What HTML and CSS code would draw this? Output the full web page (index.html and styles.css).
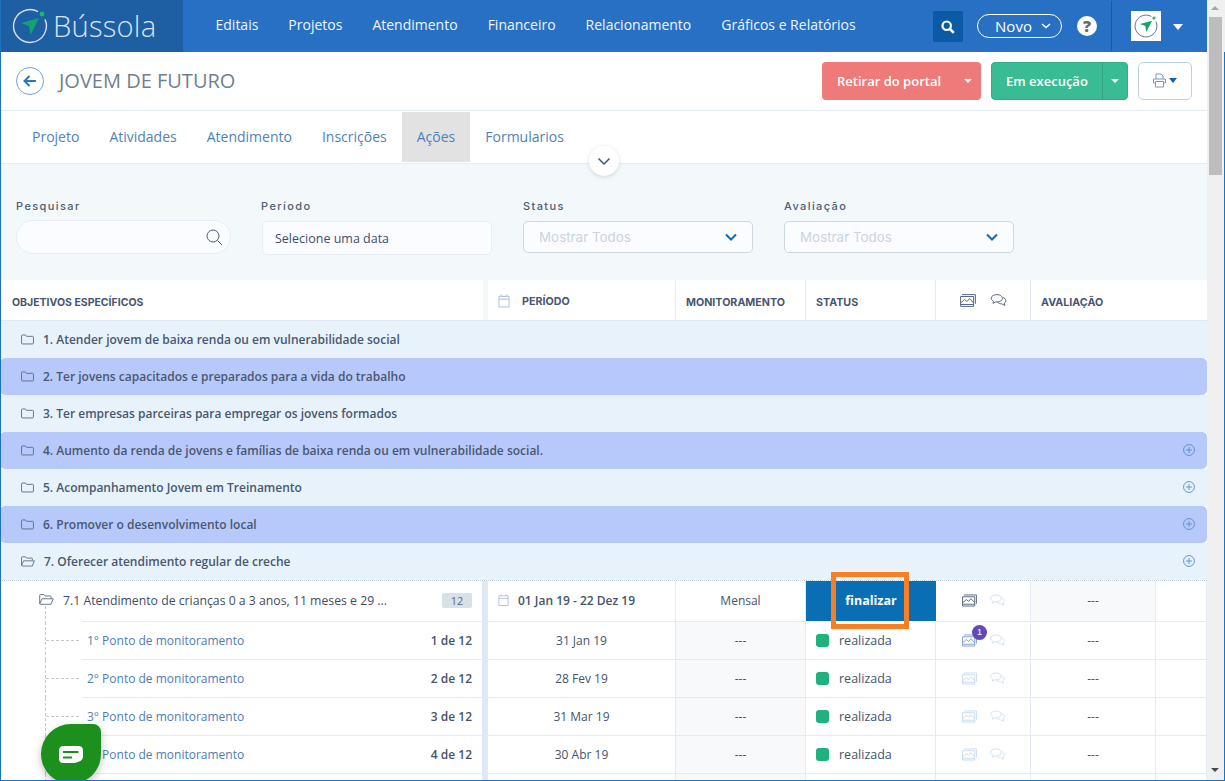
FILE: index.html
```html
<!DOCTYPE html>
<html lang="pt">
<head>
<meta charset="utf-8">
<title>Bússola</title>
<link rel="stylesheet" href="styles.css">
</head>
<body>
<svg class="sprites" width="0" height="0" aria-hidden="true">
  <symbol id="folder" viewBox="0 0 14 11"><path d="M.6 1.6q0-1 1-1h3l1.3 1.5h6.5q1 0 1 1v6.2q0 1-1 1H1.6q-1 0-1-1z" fill="none" stroke="currentColor"/></symbol>
  <symbol id="cal" viewBox="0 0 13 15"><path d="M1 2.500h11v11.500H1zM1 5.500h11M3.500.5v2M9.500.5v2" fill="none" stroke="currentColor"/></symbol>
  <symbol id="img" viewBox="0 0 16 13"><path d="M2 .6h13.400v9.200" fill="none" stroke="currentColor"/><path d="M.6 2.500h13v9.900H.6z" fill="none" stroke="currentColor"/><path d="M.6 9l4-3.500 2.500 2 2.500-3 4 4.500M.6 10.500h13" fill="none" stroke="currentColor"/></symbol>
  <symbol id="chat" viewBox="0 0 16 13"><path d="M6.500.6c3 0 5.400 1.500 5.400 3.700s-2.400 3.700-5.400 3.700H5L2.500 9.400l.4-2.200C1.500 6.500.7 5.500.7 4.300.7 2.100 3.400.6 6.500.6zM12.500 3.500c1.700.6 2.800 1.800 2.800 3.200 0 1-.5 1.800-1.500 2.400l.5 2.400-2.800-1.600c-2 0-3.700-.7-4.500-1.900" fill="none" stroke="currentColor"/></symbol>
  <symbol id="plus" viewBox="0 0 13 13"><circle cx="6.500" cy="6.500" r="5.900" fill="none" stroke="currentColor"/><path d="M6.500 3.200v6.600M3.200 6.500h6.600" stroke="currentColor"/></symbol>
  <symbol id="open" viewBox="0 0 16 12"><path d="M.6 10.500V1.600q0-1 1-1h3.500l1.400 1.500H12q1 0 1 1v1.400M.6 10.800 3 5.200h12.300l-2.400 6H1.500q-.9 0-.9-.4z" fill="none" stroke="currentColor"/></symbol>
  <symbol id="compass" viewBox="0 0 36 36"><path d="M26 3.700A16.400 16.400 0 1 0 33 11.400" fill="none" stroke="currentColor" stroke-width="1.400"/><path d="M9 15 27 10l-8.500 17-1.500-9z" fill="#12a36f"/><circle cx="30" cy="6" r="2.400" fill="#1fb86a"/></symbol>
</svg>

<header class="topbar">
  <a class="brand">
    <svg class="brand-mark"><use href="#compass"/></svg>
    <span class="brand-name">Bússola</span>
  </a>
  <nav class="mainnav">
    <a>Editais</a><a>Projetos</a><a>Atendimento</a><a>Financeiro</a><a>Relacionamento</a><a>Gráficos e Relatórios</a>
  </nav>
  <div class="tools">
    <button class="searchbtn" aria-label="Pesquisar"><svg width="14" height="14" viewBox="0 0 14 14"><circle cx="5.700" cy="5.700" r="4.200" fill="none" stroke="#fff" stroke-width="2.200"/><path d="m8.800 8.800 4 4" stroke="#fff" stroke-width="2.600"/></svg></button>
    <button class="novo">Novo<svg width="10" height="6" viewBox="0 0 10 6"><path d="m1 1 4 3.600L9 1" fill="none" stroke="#fff" stroke-width="1.500"/></svg></button>
    <span class="help">?</span>
    <div class="account">
      <span class="avatar"><svg class="avatar-mark"><use href="#compass"/></svg></span>
      <span class="caret-w"></span>
    </div>
  </div>
</header>

<section class="titlebar">
  <span class="backbtn"><svg width="14" height="12" viewBox="0 0 14 12"><path d="M6.500 1 1.500 6l5 5M2 6h11" fill="none" stroke="#2e74bd" stroke-width="2"/></svg></span>
  <h1>JOVEM DE FUTURO</h1>
  <div class="actions">
    <div class="splitbtn red"><span class="sb-main">Retirar do portal</span><span class="sb-caret"><i class="caret-w small"></i></span></div>
    <div class="splitbtn green"><span class="sb-main">Em execução</span><span class="sb-caret divided"><i class="caret-w small"></i></span></div>
    <button class="printbtn" aria-label="Imprimir">
      <svg width="13" height="15" viewBox="0 0 13 15"><path d="M3 6V1h5l2 2v3M.5 6h12v4h-2M2.500 10H.5V6M2.500 8.500h8V14h-8z" fill="none" stroke="#7f97bd"/></svg><i class="caret-b"></i>
    </button>
  </div>
</section>

<nav class="tabs">
  <a>Projeto</a><a>Atividades</a><a>Atendimento</a><a>Inscrições</a><a class="active">Ações</a><a>Formularios</a>
  <span class="collapse"><svg width="14" height="9" viewBox="0 0 14 9"><path d="m1.500 1.500 5.500 5.500 5.500-5.500" fill="none" stroke="#3f5573" stroke-width="1.500"/></svg></span>
</nav>

<section class="filters">
  <div class="field f-search"><label>Pesquisar</label>
    <div class="input pill"><svg width="17" height="17" viewBox="0 0 17 17"><circle cx="7" cy="7" r="6" fill="none" stroke="#4a5d78"/><path d="m11.500 11.500 4.500 4.500" stroke="#4a5d78"/></svg></div>
  </div>
  <div class="field f-period"><label>Período</label><div class="input plain">Selecione uma data</div></div>
  <div class="field f-status"><label>Status</label>
    <div class="input select"><span>Mostrar Todos</span><svg width="12" height="8" viewBox="0 0 12 8"><path d="m1 1.500 5 5 5-5" fill="none" stroke="#0b6cb8" stroke-width="2"/></svg></div>
  </div>
  <div class="field f-status"><label>Avaliação</label>
    <div class="input select"><span>Mostrar Todos</span><svg width="12" height="8" viewBox="0 0 12 8"><path d="m1 1.500 5 5 5-5" fill="none" stroke="#0b6cb8" stroke-width="2"/></svg></div>
  </div>
</section>

<section class="table">
  <div class="thead">
    <div class="th c-obj">OBJETIVOS ESPECÍFICOS</div>
    <div class="th c-per"><svg class="i-cal"><use href="#cal"/></svg>PERÍODO</div>
    <div class="th c-mon">MONITORAMENTO</div>
    <div class="th c-sta">STATUS</div>
    <div class="th c-med"><svg class="i-img"><use href="#img"/></svg><svg class="i-chat"><use href="#chat"/></svg></div>
    <div class="th c-ava">AVALIAÇÃO</div>
  </div>

  <div class="group"><svg class="i-folder"><use href="#folder"/></svg>1. Atender jovem de baixa renda ou em vulnerabilidade social</div>
  <div class="group alt"><svg class="i-folder"><use href="#folder"/></svg>2. Ter jovens capacitados e preparados para a vida do trabalho</div>
  <div class="group"><svg class="i-folder"><use href="#folder"/></svg>3. Ter empresas parceiras para empregar os jovens formados</div>
  <div class="group alt"><svg class="i-folder"><use href="#folder"/></svg>4. Aumento da renda de jovens e famílias de baixa renda ou em vulnerabilidade social.<svg class="i-plus"><use href="#plus"/></svg></div>
  <div class="group"><svg class="i-folder"><use href="#folder"/></svg>5. Acompanhamento Jovem em Treinamento<svg class="i-plus"><use href="#plus"/></svg></div>
  <div class="group alt"><svg class="i-folder"><use href="#folder"/></svg>6. Promover o desenvolvimento local<svg class="i-plus"><use href="#plus"/></svg></div>
  <div class="group"><svg class="i-open-g"><use href="#open"/></svg>7. Oferecer atendimento regular de creche<svg class="i-plus"><use href="#plus"/></svg></div>

  <div class="row head-row">
    <div class="td c-obj obj-main"><svg class="i-open"><use href="#open"/></svg><span class="obj-title">7.1 Atendimento de crianças 0 a 3 anos, 11 meses e 29 ...</span><span class="count">12</span></div>
    <div class="td c-per per-main"><svg class="i-cal"><use href="#cal"/></svg>01 Jan 19 - 22 Dez 19</div>
    <div class="td c-mon mon-main">Mensal</div>
    <div class="td c-sta sta-btn">finalizar</div>
    <div class="td c-med"><svg class="i-img dark"><use href="#img"/></svg><svg class="i-chat pale"><use href="#chat"/></svg></div>
    <div class="td c-ava shaded">---</div>
    <div class="td c-end"></div>
  </div>

  <div class="row">
    <div class="td c-obj point"><span class="pt-link">1° Ponto de monitoramento</span><span class="pt-n">1 de 12</span></div>
    <div class="td c-per center">31 Jan 19</div>
    <div class="td c-mon center shaded">---</div>
    <div class="td c-sta status-cell"><i class="dot"></i>realizada</div>
    <div class="td c-med"><span class="imgwrap"><svg class="i-img blue"><use href="#img"/></svg><b class="badge">1</b></span><svg class="i-chat pale"><use href="#chat"/></svg></div>
    <div class="td c-ava center">---</div>
    <div class="td c-end"></div>
  </div>
  <div class="row">
    <div class="td c-obj point"><span class="pt-link">2° Ponto de monitoramento</span><span class="pt-n">2 de 12</span></div>
    <div class="td c-per center">28 Fev 19</div>
    <div class="td c-mon center shaded">---</div>
    <div class="td c-sta status-cell"><i class="dot"></i>realizada</div>
    <div class="td c-med"><svg class="i-img pale"><use href="#img"/></svg><svg class="i-chat pale"><use href="#chat"/></svg></div>
    <div class="td c-ava center">---</div>
    <div class="td c-end"></div>
  </div>
  <div class="row">
    <div class="td c-obj point"><span class="pt-link">3° Ponto de monitoramento</span><span class="pt-n">3 de 12</span></div>
    <div class="td c-per center">31 Mar 19</div>
    <div class="td c-mon center shaded">---</div>
    <div class="td c-sta status-cell"><i class="dot"></i>realizada</div>
    <div class="td c-med"><svg class="i-img pale"><use href="#img"/></svg><svg class="i-chat pale"><use href="#chat"/></svg></div>
    <div class="td c-ava center">---</div>
    <div class="td c-end"></div>
  </div>
  <div class="row">
    <div class="td c-obj point"><span class="pt-link">4° Ponto de monitoramento</span><span class="pt-n">4 de 12</span></div>
    <div class="td c-per center">30 Abr 19</div>
    <div class="td c-mon center shaded">---</div>
    <div class="td c-sta status-cell"><i class="dot"></i>realizada</div>
    <div class="td c-med"><svg class="i-img pale"><use href="#img"/></svg><svg class="i-chat pale"><use href="#chat"/></svg></div>
    <div class="td c-ava center">---</div>
    <div class="td c-end"></div>
  </div>
  <div class="row stub">
    <div class="td c-obj point"></div><div class="td c-per"></div><div class="td c-mon shaded"></div><div class="td c-sta"></div><div class="td c-med"></div><div class="td c-ava"></div><div class="td c-end"></div>
  </div>
</section>

<div class="highlight"></div>
<div class="chatfab"><svg width="24" height="18" viewBox="0 0 24 18"><path d="M4.500 0h15Q24 0 24 4.500v6Q24 14 20 15.500L16 17H4.500Q0 17 0 12.500v-8Q0 0 4.500 0z" fill="#fff"/><path d="M4 6h15.500M4 11.500h9" stroke="#1d8f1d" stroke-width="2"/></svg></div>

<div class="scrollbar">
  <i class="sb-up"></i><i class="sb-thumb"></i><i class="sb-down"></i>
</div>
<div class="frame-left"></div>
<div class="frame-right"></div>
<div class="frame-bottom"></div>
</body>
</html>
```
FILE: styles.css
```css
* { box-sizing: border-box; }
html, body { margin: 0; height: 100%; overflow: hidden; }
body { width: 1225px; height: 781px; position: relative; background: #fff; font-family: "Open Sans", "Liberation Sans", sans-serif; color: #3e4f6c; }
.sprites { position: absolute; }
button { font: inherit; border: 0; padding: 0; background: none; }

.topbar { height: 52px; width: 1207px; background: #2770c3; display: flex; color: #fff; }
.brand { width: 183px; background: #1e5ea3; display: flex; align-items: center; padding-left: 12px; color: #d4e0ee; }
.brand-mark { width: 36px; height: 36px; flex: none; }
.brand-name { font-size: 29.200px; font-weight: 300; margin-left: 5px; letter-spacing: .2px; color: #d7e3f0; }
.mainnav { display: flex; gap: 30px; padding-left: 32.500px; padding-top: 15px; font-size: 14px; color: #f0f5fb; line-height: 20px; }
.tools { margin-left: auto; display: flex; align-items: flex-start; }
.searchbtn { width: 30px; height: 31px; margin-top: 11px; background: #0b5aa5; display: flex; align-items: center; justify-content: center; }
.novo { width: 85px; height: 24px; margin-top: 14px; margin-left: 14px; border: 1px solid #fff; border-radius: 12px; color: #fff; font-size: 15px; display: flex; align-items: center; justify-content: center; gap: 9px; padding-left: 7px; }
.help { width: 20px; height: 20px; margin-top: 16px; margin-left: 15px; border-radius: 50%; background: #fff; color: #6a6a6a; font-weight: 800; font-size: 16px; line-height: 20px; text-align: center; }
.account { margin-left: 14px; margin-top: 1px; height: 50px; border-left: 1px solid #1c5a9f; width: 96px; padding-left: 19px; padding-top: 10px; display: flex; gap: 12px; }
.avatar { width: 30px; height: 30px; background: #fff; display: flex; align-items: center; justify-content: center; color: #5a6a80; }
.avatar-mark { width: 24px; height: 24px; }
.caret-w { width: 0; height: 0; border: 5.500px solid transparent; border-top: 6px solid #fff; border-bottom: 0; margin-top: 13px; }
.caret-w.small { display: block; margin: 0; border-width: 4px; border-top-width: 4px; border-bottom-width: 0; }
.caret-b { width: 0; height: 0; border: 4px solid transparent; border-top: 5px solid #0e62ae; border-bottom: 0; display: block; margin-left: 3px; }

.titlebar { height: 59px; width: 1207px; border-bottom: 1px solid #e2edf2; display: flex; align-items: center; padding-left: 16px; }
.backbtn { width: 28px; height: 28px; border: 1px solid #6ea3dc; border-radius: 50%; display: flex; align-items: center; justify-content: center; }
h1 { margin: 0 0 0 15px; font-size: 20px; font-weight: 400; color: #6f7f91; line-height: 26px; }
.actions { margin-left: auto; margin-right: 15px; display: flex; gap: 10px; margin-top: -1px; }
.splitbtn { height: 38px; border-radius: 4px; display: flex; color: #fff; font-size: 13px; font-weight: 600; line-height: 38px; }
.splitbtn.red { background: #ee7a7a; width: 159px; }
.splitbtn.green { background: #39bb93; width: 137px; border: 1px solid #2fae87; line-height: 36px; }
.sb-main { flex: 1; padding-left: 15px; }
.green .sb-main { padding-left: 14px; }
.sb-caret { width: 25px; display: flex; align-items: center; justify-content: center; padding-right: 2px; }
.sb-caret.divided { border-left: 1px solid #2da582; padding: 0; }
.printbtn { width: 54px; height: 38px; border: 1px solid #b5d3ea; border-radius: 5px; background: #fff; display: flex; align-items: center; justify-content: center; }

.tabs { height: 53px; width: 1207px; border-bottom: 1px solid #e2edf2; display: flex; padding-left: 17px; position: relative; align-items: flex-start; padding-top: 1px; }
.tabs a { height: 50px; padding: 0 15px; line-height: 50px; font-size: 14px; color: #4d83b9; }
.tabs a.active { background: #e2e2e2; padding: 0 15px; }
.collapse { position: absolute; left: 589px; top: 35px; width: 30px; height: 30px; border-radius: 50%; background: #fff; box-shadow: 0 1px 4px rgba(60,80,110,.2); display: flex; align-items: center; justify-content: center; }

.filters { height: 116px; width: 1207px; background: #f3f8fb; display: flex; padding: 36px 0 0 16px; }
.field { display: flex; flex-direction: column; }
.field label { font-family: Inter, "Noto Sans", sans-serif; font-size: 11px; font-weight: 500; letter-spacing: 1.400px; line-height: 13px; height: 20px; color: #4f5d74; }
.input { height: 34px; background: #fbfcff; border: 1px solid #e6edf7; font-size: 12.500px; display: flex; align-items: center; }
.f-search { width: 245px; }
.f-search .pill { width: 215px; border-radius: 17px; justify-content: flex-end; padding-right: 7px; }
.f-period { width: 262px; }
.f-period .plain { width: 230px; border-radius: 5px; padding-left: 12px; color: #3e4f6c; margin: 1px 0 0 1px; }
.f-status { width: 261px; }
.select { width: 230px; height: 32px; margin-top: 1px; border: 1px solid #ccd7e0; border-radius: 5px; padding: 0 15px; justify-content: space-between; color: #cdd3df; font-family: Inter, sans-serif; font-size: 13.400px; }

.table { width: 1207px; }
.thead { height: 41px; background: #f3f8fb; display: flex; border-bottom: 1px solid #dfe8f3; }
.th { background: #fff; display: flex; align-items: center; height: 40px; padding-top: 5px; font-family: Inter, sans-serif; font-size: 10.700px; font-weight: 700; color: #47566f; padding-left: 10px; border-right: 1px solid #e4ebf4; }
.c-obj { width: 483px; flex: none; }
.c-per { width: 194px; flex: none; }
.c-mon { width: 130px; flex: none; }
.c-sta { width: 130px; flex: none; }
.c-med { width: 95px; flex: none; }
.c-ava { width: 125px; flex: none; }
.c-end { flex: 1; }
.thead .c-obj { padding-left: 12px; font-size: 10.500px; border-right: 0; }
.thead .c-per { width: 188px; margin-left: 5px; padding-left: 10px; padding-top: 2px; }
.thead .c-ava { flex: 1; border-right: 0; }
.th.c-med { padding-left: 24px; gap: 14px; padding-top: 1px; }
.td.c-med { padding-left: 26px; gap: 13px; }
.i-cal { width: 12px; height: 14px; color: #a9b9df; flex: none; margin-right: 12px; }
.i-img { width: 16px; height: 13px; color: #56698a; }
.i-img.dark { width: 15px; color: #55687f; }
.i-img.blue { width: 15px; color: #7d9fd0; }
.i-img.pale { width: 15px; color: #c8dcf0; }
.i-chat { width: 17px; height: 13px; color: #5a6b85; }
.i-chat.pale { width: 15px; color: #cfe0f0; }

.group { height: 37px; background: #e7f2fb; display: flex; align-items: center; padding-left: 21px; font-size: 12px; font-weight: 600; color: #49586f; position: relative; }
.group.alt { background: #b7c8fb; border-radius: 5px; }
.i-folder { width: 13px; height: 11px; color: #5f6d82; margin-right: 9px; flex: none; }
.i-open-g { width: 14px; height: 11px; color: #5f6d82; margin-right: 9px; flex: none; }
.i-plus { width: 12px; height: 12px; color: #5b8fd0; position: absolute; right: 12px; top: 12px; }

.row { height: 38px; display: flex; }
.row.head-row { height: 42px; border-top: 1px dotted #c4d3e0; }
.row.stub { height: 10px; }
.td { display: flex; align-items: center; height: 100%; font-size: 12px; border-right: 1px solid #e4ebf4; border-bottom: 1px solid #e4ebf4; color: #45546c; padding-left: 10px; }
.td.c-per { border-left: 6px solid #e0e8f3; padding-left: 10px; }
.td.c-obj { width: 482px; border-right: 0; border-bottom: 0; }
.center { justify-content: center; padding-left: 0 !important; }
.shaded { background: #f7f9fb; }
.obj-main { padding-left: 39px; position: relative; background: linear-gradient(#e4ebf4, #e4ebf4) right bottom / 400px 1px no-repeat; }
.obj-main::before { content: ""; position: absolute; left: 45px; top: 25px; bottom: 0; width: 1px; background: repeating-linear-gradient(#c8c8c8 0 3px, transparent 3px 5px); }
.i-open { width: 15px; height: 11px; color: #5b6b82; flex: none; margin-right: 9px; margin-top: -2px; }
.obj-title { font-size: 12.250px; white-space: nowrap; color: #3f4c66; }
.count { margin-left: auto; margin-right: 10px; width: 30px; height: 15px; border-radius: 2px; background: #d8e0e8; font-size: 11px; text-align: center; line-height: 15px; color: #5c6a7e; }
.per-main { font-weight: 600; }
.td.per-main .i-cal { width: 11px; margin-right: 9px; }
.mon-main { justify-content: center; padding: 0; }
.sta-btn { background: #0a6eb4; color: #fff; font-size: 12.500px; font-weight: 700; justify-content: center; padding: 0; border-right: 0; border-bottom-color: #fff; }
.td.c-ava { justify-content: center; padding: 0; }
.head-row .td { padding-bottom: 2px; }
.point { padding-left: 0; padding-bottom: 1px; position: relative; background: linear-gradient(#e4ebf4, #e4ebf4) right bottom / 400px 1px no-repeat; }
.point::before { content: ""; position: absolute; left: 45px; top: 0; bottom: 0; width: 1px; background: repeating-linear-gradient(#c8c8c8 0 3px, transparent 3px 5px); }
.point::after { content: ""; position: absolute; left: 46px; top: 18px; width: 33px; height: 1px; background: repeating-linear-gradient(90deg, #c8c8c8 0 3px, transparent 3px 5px); }
.stub .point::after { display: none; }
.pt-link { margin-left: 87px; color: #4d7cb6; font-size: 12px; }
.pt-n { margin-left: auto; margin-right: 10px; font-weight: 600; font-size: 12px; color: #45546c; }
.status-cell { font-size: 12.500px; font-weight: 500; }
.dot { width: 13px; height: 13px; border-radius: 3px; background: #1fb27d; margin-right: 10px; flex: none; }
.imgwrap { position: relative; display: flex; }
.badge { position: absolute; left: 10px; top: -9px; width: 15px; height: 15px; border-radius: 50%; background: #5e4bb8; color: #fff; font-size: 9px; font-weight: 500; line-height: 15px; text-align: center; font-family: "Liberation Sans", sans-serif; }

.highlight { position: absolute; left: 831px; top: 572px; width: 78px; height: 57px; border: 5px solid #f97f25; }
.chatfab { position: absolute; left: 41px; top: 724px; width: 60px; height: 60px; padding-top: 2px; background: #1d8f1d; border-radius: 50% 8px 50% 50%; box-shadow: 0 3px 8px rgba(0,0,0,.25); display: flex; align-items: center; justify-content: center; }

.scrollbar { position: absolute; right: 0; top: 0; width: 18px; height: 781px; background: #f0f0f0; }
.sb-thumb { position: absolute; left: 2px; top: 17px; width: 13px; height: 158px; background: #bdbdbd; }
.sb-up, .sb-down { position: absolute; left: 4px; width: 0; height: 0; border: 4px solid transparent; }
.sb-up { top: 6px; border-bottom: 4px solid #a5a5a5; border-top: 0; }
.sb-down { top: 768px; border-top: 4px solid #4a4a4a; border-bottom: 0; }
.frame-left { position: absolute; left: 0; top: 0; width: 1px; height: 781px; background: #1d74bd; }
.frame-right { position: absolute; right: 0; top: 52px; width: 1px; height: 729px; background: #1d74bd; }
.frame-bottom { position: absolute; left: 0; bottom: 0; width: 1225px; height: 1px; background: #1d74bd; }
```
